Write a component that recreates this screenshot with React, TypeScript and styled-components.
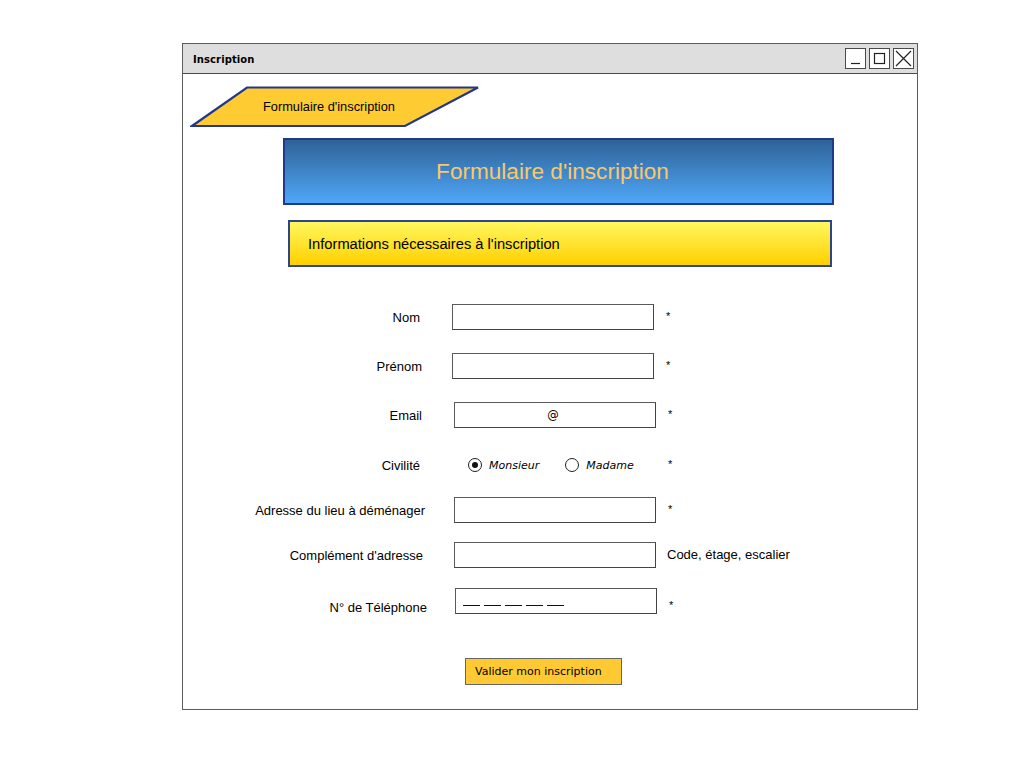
import React from "react";
import styled, { createGlobalStyle } from "styled-components";

const GlobalStyle = createGlobalStyle`
  html, body { margin: 0; padding: 0; background: #ffffff; }
  body { font-family: "Liberation Sans", Arial, sans-serif; color: #000; }
  * { box-sizing: border-box; }
`;

const hand = `"Comic Sans MS", "DejaVu Sans", sans-serif`;

const Page = styled.div`
  width: 1024px;
  height: 768px;
  padding: 43px 0 0 182px;
`;

const Window = styled.div`
  width: 736px;
  height: 667px;
  border: 1px solid #5c5c5c;
  background: #fff;
  display: flex;
  flex-direction: column;
`;

const TitleBar = styled.div`
  height: 30px;
  background: #dedede;
  border-bottom: 1px solid #4a4a4a;
  display: flex;
  align-items: center;
  justify-content: space-between;
  padding: 0 3px 0 10px;
`;

const Title = styled.span`
  font-family: ${hand};
  font-weight: bold;
  font-size: 10px;
  letter-spacing: 0.1px;
  padding-top: 1px;
`;

const WinButtons = styled.div`
  display: flex;
  gap: 3px;
`;

const WinButton = styled.div`
  width: 21px;
  height: 21px;
  border: 1px solid #4a4a4a;
  background: #fff;
  display: flex;
  align-items: center;
  justify-content: center;
`;

const Content = styled.div`
  flex: 1;
  display: flex;
  flex-direction: column;
  align-items: flex-start;
`;

const Banner = styled.div`
  position: relative;
  margin: 12px 0 0 7px;
  width: 290px;
  height: 42px;
  display: flex;
  align-items: center;
  padding-left: 73px;
  padding-bottom: 1px;
  font-size: 12.8px;
`;

const BannerShape = styled.svg`
  position: absolute;
  left: 0;
  top: 0;
`;

const BannerText = styled.span`
  position: relative;
`;

const Header = styled.div`
  margin: 10px 0 0 100px;
  width: 551px;
  height: 67px;
  border: 2px solid #1f3a8a;
  background: linear-gradient(to bottom, #2e6296, #4fa7f8);
  display: flex;
  align-items: center;
  justify-content: center;
  color: #f8c86a;
  font-size: 22.6px;
  padding: 1px 12px 0 0;
`;

const Info = styled.div`
  margin: 15px 0 0 105px;
  width: 544px;
  height: 47px;
  border: 2px solid #2c4590;
  background: linear-gradient(to bottom, #fff75e, #ffd000);
  display: flex;
  align-items: center;
  padding-left: 18px;
  padding-top: 1px;
  font-size: 14.7px;
`;

const Form = styled.div`
  margin-top: 37px;
  display: flex;
  flex-direction: column;
`;

const Row = styled.div<{ $top: number }>`
  display: flex;
  align-items: center;
  height: 26px;
  margin-top: ${(p) => p.$top}px;
`;

const Label = styled.div<{ $pad: number; $drop?: number }>`
  width: 245px;
  text-align: right;
  padding-right: ${(p) => p.$pad}px;
  padding-top: ${(p) => p.$drop ?? 1}px;
  font-size: 13px;
  white-space: nowrap;
`;

const Field = styled.div<{ $left: number }>`
  margin-left: ${(p) => p.$left}px;
  width: 202px;
  height: 26px;
  border: 1px solid #5a5a5a;
  border-right-color: #444;
  border-bottom: 1.5px solid #444;
  background: #fff;
  display: flex;
  align-items: center;
`;

const CenterText = styled.span`
  flex: 1;
  text-align: center;
  font-family: ${hand};
  font-size: 11.5px;
  padding-right: 4px;
`;

const Dashes = styled.div`
  display: flex;
  gap: 4px;
  padding: 8px 0 0 7px;
`;

const Dash = styled.span`
  width: 17px;
  height: 1px;
  background: #111;
`;

const Star = styled.span<{ $drop?: number }>`
  margin-left: 12px;
  font-size: 11px;
  padding-bottom: 3px;
  padding-top: ${(p) => p.$drop ?? 0}px;
`;

const Hint = styled.span`
  margin-left: 11px;
  font-size: 13px;
  padding-bottom: 2px;
`;

const Radios = styled.div`
  margin-left: 26px;
  width: 202px;
  display: flex;
  align-items: center;
  padding-left: 14px;
`;

const RadioItem = styled.label<{ $gap: number }>`
  display: flex;
  align-items: center;
  margin-right: ${(p) => p.$gap}px;
  font-family: ${hand};
  font-style: italic;
  font-size: 11px;
`;

const RadioCircle = styled.span<{ $on?: boolean }>`
  width: 14px;
  height: 14px;
  border: 1.4px solid #222;
  border-radius: 50%;
  margin-right: 7px;
  display: flex;
  align-items: center;
  justify-content: center;
  &::after {
    content: "";
    display: ${(p) => (p.$on ? "block" : "none")};
    width: 6px;
    height: 6px;
    border-radius: 50%;
    background: #111;
  }
`;

const Submit = styled.div`
  margin: 44px 0 0 282px;
  width: 157px;
  height: 27px;
  background: #ffc933;
  border: 1.5px solid #666;
  display: flex;
  align-items: center;
  padding-left: 9px;
  font-family: ${hand};
  font-size: 11px;
`;

export default function App() {
  return (
    <Page>
      <GlobalStyle />
      <Window>
        <TitleBar>
          <Title>Inscription</Title>
          <WinButtons>
            <WinButton>
              <svg width="15" height="15" viewBox="0 0 15 15">
                <line x1="3" y1="12.5" x2="12" y2="12.5" stroke="#222" strokeWidth="1.2" />
              </svg>
            </WinButton>
            <WinButton>
              <svg width="15" height="15" viewBox="0 0 15 15">
                <rect x="2.5" y="2.5" width="10" height="10" fill="none" stroke="#222" strokeWidth="1.2" />
              </svg>
            </WinButton>
            <WinButton>
              <svg width="17" height="17" viewBox="0 0 17 17">
                <path d="M1 1 L16 16 M16 1 L1 16" stroke="#222" strokeWidth="1.2" />
              </svg>
            </WinButton>
          </WinButtons>
        </TitleBar>
        <Content>
          <Banner>
            <BannerShape width="290" height="42" viewBox="0 0 290 42">
              <polygon points="2,40 57,1.5 288,1.5 215,40" fill="#fecb33" stroke="#22378a" strokeWidth="2.2" strokeLinejoin="miter" />
            </BannerShape>
            <BannerText>Formulaire d'inscription</BannerText>
          </Banner>
          <Header>Formulaire d'inscription</Header>
          <Info>Informations nécessaires à l'inscription</Info>
          <Form>
            <Row $top={0}>
              <Label $pad={8}>Nom</Label>
              <Field $left={24} />
              <Star>*</Star>
            </Row>
            <Row $top={23}>
              <Label $pad={6}>Prénom</Label>
              <Field $left={24} />
              <Star>*</Star>
            </Row>
            <Row $top={23}>
              <Label $pad={6}>Email</Label>
              <Field $left={26}>
                <CenterText>@</CenterText>
              </Field>
              <Star>*</Star>
            </Row>
            <Row $top={24}>
              <Label $pad={8}>Civilité</Label>
              <Radios>
                <RadioItem $gap={26}>
                  <RadioCircle $on />
                  Monsieur
                </RadioItem>
                <RadioItem $gap={0}>
                  <RadioCircle />
                  Madame
                </RadioItem>
              </Radios>
              <Star>*</Star>
            </Row>
            <Row $top={19}>
              <Label $pad={3}>Adresse du lieu à déménager</Label>
              <Field $left={26} />
              <Star>*</Star>
            </Row>
            <Row $top={19}>
              <Label $pad={5}>Complément d'adresse</Label>
              <Field $left={26} />
              <Hint>Code, étage, escalier</Hint>
            </Row>
            <Row $top={20}>
              <Label $pad={1} $drop={13}>N° de Téléphone</Label>
              <Field $left={27}>
                <Dashes>
                  <Dash />
                  <Dash />
                  <Dash />
                  <Dash />
                  <Dash />
                </Dashes>
              </Field>
              <Star $drop={10}>*</Star>
            </Row>
          </Form>
          <Submit>Valider mon inscription</Submit>
        </Content>
      </Window>
    </Page>
  );
}
